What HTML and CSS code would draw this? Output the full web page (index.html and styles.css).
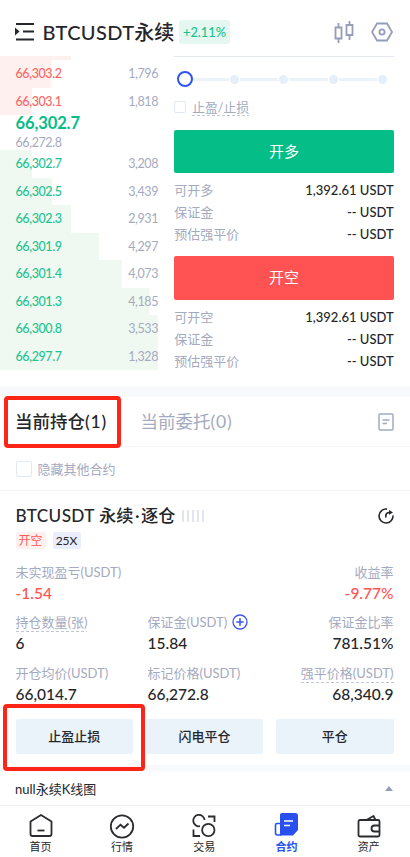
FILE: index.html
```html
<!DOCTYPE html>
<html lang="zh-CN">
<head>
<meta charset="utf-8">
<title>BTCUSDT永续</title>
<link rel="stylesheet" href="styles.css">
</head>
<body>
<header class="top">
  <svg class="menu" width="19" height="20" viewBox="0 0 19 20"><path d="M1 2h18M8 9.500h11M1 17.500h18" fill="none" stroke="#25262a" stroke-width="2"/><path d="M0 5.500l4.500 4-4.500 4z" fill="#25262a"/></svg>
  <h1><span class="pair">BTCUSDT</span>永续</h1>
  <span class="change">+2.11%</span>
  <svg class="candles" width="20" height="24" viewBox="0 0 20 24" fill="none" stroke="#969db8" stroke-width="1.800"><path d="M1.500 7.500h6v11h-6zM4.500 3v4.500M4.500 18.500V23M12.500 5h6v10h-6zM15.500 1v4M15.500 15v5"/></svg>
  <svg class="settings" width="22" height="20" viewBox="0 0 22 20" fill="none" stroke="#969db8" stroke-width="1.800"><path d="M6 1.500h10l5 8.500-5 8.500H6L1 10z"/><circle cx="11" cy="10" r="2.600"/></svg>
</header>
<main>
<section class="trade">
  <div class="book">
    <div class="edge"></div>
    <div class="level ask w51"><b>66,303.2</b><span>1,796</span></div>
    <div class="level ask w32"><b>66,303.1</b><span>1,818</span></div>
    <div class="last">66,302.7</div>
    <div class="index">66,272.8</div>
    <div class="level bid w32"><b>66,302.7</b><span>3,208</span></div>
    <div class="level bid w52"><b>66,302.5</b><span>3,439</span></div>
    <div class="level bid w71"><b>66,302.3</b><span>2,931</span></div>
    <div class="level bid w99"><b>66,301.9</b><span>4,297</span></div>
    <div class="level bid w122"><b>66,301.4</b><span>4,073</span></div>
    <div class="level bid w149"><b>66,301.3</b><span>4,185</span></div>
    <div class="level bid w158"><b>66,300.8</b><span>3,533</span></div>
    <div class="level bid w158"><b>66,297.7</b><span>1,328</span></div>
  </div>
  <div class="order">
    <div class="slider"><i class="knob"></i><i class="rail"></i><i class="dot"></i><i class="rail"></i><i class="dot"></i><i class="rail"></i><i class="dot"></i><i class="rail"></i><i class="dot"></i></div>
    <div class="tpsl"><i class="check small"></i><span class="dashed">止盈/止损</span></div>
    <div class="action long">开多</div>
    <div class="info"><span>可开多</span><b>1,392.61 USDT</b></div>
    <div class="info"><span>保证金</span><b>-- USDT</b></div>
    <div class="info"><span>预估强平价</span><b>-- USDT</b></div>
    <div class="action short">开空</div>
    <div class="info"><span>可开空</span><b>1,392.61 USDT</b></div>
    <div class="info"><span>保证金</span><b>-- USDT</b></div>
    <div class="info"><span>预估强平价</span><b>-- USDT</b></div>
  </div>
</section>
<section class="positions">
  <div class="tabs">
    <span class="tab active">当前持仓<em>(1)</em><i class="mark mark-tab"></i></span>
    <span class="tab">当前委托<em>(0)</em></span>
    <svg class="doc" width="16" height="18" viewBox="0 0 16 18" fill="none" stroke="#a3aac4" stroke-width="1.500"><rect x="1" y="1" width="14" height="16" rx="1"/><path d="M4.500 7h7M4.500 10.500h4.500"/></svg>
  </div>
  <div class="filter"><i class="check"></i><span>隐藏其他合约</span></div>
  <div class="card">
    <div class="title"><h2><span class="pair">BTCUSDT</span> 永续<span class="mid">·</span>逐仓</h2><span class="bars"><i></i><i></i><i></i><i></i><i></i></span>
      <svg class="share" width="16" height="16" viewBox="0 0 16 16" fill="none" stroke="#25262a" stroke-width="1.600"><path d="M9 1.100A7 7 0 1 0 15 7.500"/><path d="M7.800 9.500V7.500Q8 4.600 11.500 4.500"/><path d="M11 2l4 2.500-4 2.300z" fill="#25262a" stroke="none"/></svg>
    </div>
    <div class="tags"><span class="tag side">开空</span><span class="tag lever">25X</span></div>
    <div class="stats first">
      <div><span>未实现盈亏<em>(USDT)</em></span><b class="loss">-1.54</b></div>
      <div></div>
      <div><span>收益率</span><b class="loss">-9.77%</b></div>
    </div>
    <div class="stats">
      <div><span class="dashed">持仓数量(张)</span><b>6</b></div>
      <div><span>保证金<em>(USDT)</em><svg class="plus" width="16" height="16" viewBox="0 0 16 16" fill="none" stroke="#3c56f0" stroke-width="1.300"><circle cx="8" cy="8" r="7"/><path d="M4.300 8h7.400M8 4.300v7.400" stroke-width="1.600"/></svg></span><b>15.84</b></div>
      <div><span>保证金比率</span><b>781.51%</b></div>
    </div>
    <div class="stats">
      <div><span>开仓均价<em>(USDT)</em></span><b>66,014.7</b></div>
      <div><span>标记价格<em>(USDT)</em></span><b>66,272.8</b></div>
      <div><span class="dashed">强平价格<em>(USDT)</em></span><b>68,340.9</b></div>
    </div>
    <div class="buttons"><span>止盈止损<i class="mark mark-button"></i></span><span>闪电平仓</span><span>平仓</span></div>
  </div>
</section>
<div class="chart"><span>null永续K线图</span><i class="up"></i></div>
</main>
<nav>
  <div><svg width="26" height="26" viewBox="0 0 26 26" fill="none" stroke="#2b2c30" stroke-width="1.800" stroke-linejoin="round"><path d="M2.500 8.500L13 2l10.500 6.500V21q0 2-2 2h-17q-2 0-2-2z"/><path d="M9.500 17.500h7"/></svg><span>首页</span></div>
  <div><svg width="26" height="26" viewBox="0 0 26 26" fill="none" stroke="#2b2c30" stroke-width="1.800"><circle cx="13" cy="13.500" r="11.200"/><path d="M7 16l4.500-4.300 3.500 3 4.500-4.200"/></svg><span>行情</span></div>
  <div><svg width="26" height="26" viewBox="0 0 26 26" fill="none" stroke="#2b2c30" stroke-width="1.800"><path d="M9 13.200A5.700 5.700 0 1 1 13.600 7"/><circle cx="17.300" cy="17" r="6.200"/><path d="M17 3.500h6.500V9M2.500 16.500V23H9"/></svg><span>交易</span></div>
  <div class="on"><svg width="26" height="26" viewBox="0 0 26 26"><path d="M9 0h13q3 0 3 3v14l-5 5.500H7V2q0-2 2-2z" fill="#2850ef"/><path d="M7 10.500H4q-1.500 0-1.500 1.500v8q0 2 2 2H8" fill="none" stroke="#2850ef" stroke-width="1.600"/><path d="M11 8h9M11 12.500h6" stroke="#fff" stroke-width="1.600"/></svg><span>合约</span></div>
  <div><svg width="26" height="26" viewBox="0 0 26 26" fill="none" stroke="#2b2c30" stroke-width="1.800" stroke-linejoin="round"><rect x="2.500" y="7" width="21" height="16.500" rx="1.500"/><path d="M10.500 7l7-4 2 4M24 12.500h-5.500a3 3 0 0 0 0 6H24"/></svg><span>资产</span></div>
</nav>
</body>
</html>
```
FILE: styles.css
```css
* { box-sizing: border-box; }
body {
  margin: 0;
  width: 410px;
  height: 857px;
  overflow: hidden;
  background: #fff;
  color: #25262a;
  font-family: Lato, "Noto Sans CJK SC", sans-serif;
  font-size: 13px;
  white-space: nowrap;
}
b, h1, h2 { font-weight: 500; margin: 0; }
i, em { font-style: normal; }
svg { display: block; flex: none; }

.top { display: flex; align-items: center; height: 56px; padding: 8px 17px 0 15px; }
.top h1 { margin-left: 8.500px; width: 132px; font-size: 20px; line-height: 28px; }
.pair { letter-spacing: .35px; }
.change { margin-left: 4.500px; width: 51px; height: 24px; line-height: 24px; text-align: center; border-radius: 3px; background: #e4f8f1; color: #14c48e; font-size: 12.800px; font-weight: 500; }
.candles { margin-left: auto; }
.settings { margin-left: 17px; }

.trade { display: flex; height: 330px; }
.book { width: 158px; }
.edge { height: 4px; width: 71px; background: #fff0f0; }
.level { display: flex; justify-content: space-between; align-items: center; height: 27.500px; padding: 1px 0 0 15.500px; background-repeat: no-repeat; font-size: 12.500px; letter-spacing: -.4px; line-height: 18px; }
.level b { font-weight: 500; }
.level span { color: #a4aac0; }
.ask { background-image: linear-gradient(#fff0f0, #fff0f0); }
.bid { background-image: linear-gradient(#f0f9f1, #f0f9f1); }
.ask b { color: #ff6464; }
.bid b { color: #1cc492; }
.w32 { background-size: 32px 100%; }
.w51 { background-size: 51px 100%; }
.w52 { background-size: 52px 100%; }
.w71 { background-size: 71px 100%; }
.w99 { background-size: 99px 100%; }
.w122 { background-size: 122px 100%; }
.w149 { background-size: 149.500px 100%; }
.w158 { background-size: 158px 100%; }
.last { height: 17px; padding-left: 15.500px; line-height: 16px; font-size: 16.500px; font-weight: 700; letter-spacing: -.1px; color: #04bd87; }
.index { height: 18px; padding-left: 15.500px; line-height: 22px; font-size: 12.500px; letter-spacing: -.4px; color: #a4aac0; }

.order { width: 219.500px; margin-left: 16.200px; border-top: 1px solid #e4e8f2; }
.slider { display: flex; align-items: center; height: 16px; margin: 14px 7px 0 3px; }
.knob { flex: none; width: 16px; height: 16px; margin-right: -3px; border: 2.500px solid #2f54f0; border-radius: 50%; background: #fff; z-index: 1; }
.rail { flex: 1; height: 3px; margin: 0 1px; background: #eaf2fa; }
.dot { width: 9px; height: 9px; border-radius: 50%; background: #e5eff9; }
.tpsl { display: flex; align-items: center; height: 18px; margin-top: 11px; color: #a4aac0; }
.tpsl span { margin-left: 6px; line-height: 17px; font-size: 12.800px; }
.check { width: 16px; height: 16px; border: 1.500px solid #e0e8f4; border-radius: 2px; }
.check.small { width: 12px; height: 12px; border-width: 1px; }
.dashed { background: repeating-linear-gradient(90deg, #c2c7d8 0 3px, transparent 3px 5px) 0 100% / 100% 1px no-repeat; }
.action { height: 43.500px; border-radius: 2px; color: #fff; font-size: 15px; line-height: 43px; text-align: center; }
.long { margin: 13.500px 0 6px; background: #04bd87; }
.short { margin: 10.500px 0 6px; background: #ff5353; }
.info { display: flex; justify-content: space-between; height: 22.200px; line-height: 22px; color: #a4aac0; }
.info b { color: #25262a; font-size: 13px; }

.positions { border-top: 11px solid #f7f9fd; height: 379px; }
.tabs { display: flex; align-items: center; height: 50px; padding: 1px 16px 0 15px; border-bottom: 1px solid #f5f6f9; font-size: 17.500px; }
.tabs em { letter-spacing: .8px; }
.tab { position: relative; line-height: 24px; color: #a4aac0; }
.tab.active { width: 125.500px; color: #25262a; font-weight: 500; }
.doc { margin-left: auto; }
.filter { display: flex; align-items: center; height: 44px; padding-left: 15.500px; border-bottom: 1px solid #f5f6f9; color: #a4aac0; }
.filter span { margin-left: 6px; }
.card { padding: 12px 16.500px 0 15.500px; }
.title { display: flex; align-items: center; height: 25px; }
.title h2 { width: 162px; font-size: 17.200px; line-height: 25px; }
.mid { margin: 0 1.500px; }
.bars { display: flex; gap: 3px; margin-left: 4px; }
.bars i { width: 2px; height: 12px; background: #e0e5f0; }
.share { margin-left: auto; }
.tags { display: flex; gap: 7px; margin-top: 4px; height: 17px; line-height: 17px; font-size: 12px; }
.tag { border-radius: 2px; text-align: center; }
.side { width: 30px; background: #fff0f0; color: #ff5b5b; }
.lever { width: 28px; background: #e9edfd; }
.stats { display: grid; grid-template-columns: 132px 116px 130px; height: 50.500px; }
.stats div { display: flex; flex-direction: column; align-items: flex-start; }
.stats div:last-child { align-items: flex-end; }
.stats.first { margin-top: 13.500px; }
.stats span { display: flex; height: 19px; line-height: 18px; color: #a4aac0; }
.stats b { height: 22px; line-height: 22px; font-size: 15.500px; }
.stats .loss { color: #ff5353; }
.plus { margin: 1px 0 0 5px; }
.buttons { display: grid; grid-template-columns: repeat(3, 1fr); gap: 13px; margin-top: 5px; }
.buttons > span { position: relative; height: 35px; line-height: 35px; text-align: center; border-radius: 2px; background: #eaf2fa; font-weight: 500; }
.mark { position: absolute; border: 4px solid #fd2418; border-radius: 4px; }
.mark-tab { left: -11px; top: -14px; width: 117px; height: 52px; }
.mark-button { left: -12.500px; top: -15px; width: 142px; height: 67px; }

.chart { display: flex; align-items: center; justify-content: space-between; height: 41px; padding: 7px 17px 0 15px; border-bottom: 1px solid #edf0f7; background: linear-gradient(#f8f9fb, #f8f9fb 5px, #fff 8px); }
.up { border: 4px solid transparent; border-top: 0; border-bottom: 5px solid #969db8; }
nav { display: flex; height: 51px; padding-top: 7px; }
nav div { width: 82.200px; display: flex; flex-direction: column; align-items: center; font-size: 11px; }
nav div:first-child { width: 81px; }
nav span { line-height: 15px; }
.on { color: #2850ef; font-weight: 700; }
```
